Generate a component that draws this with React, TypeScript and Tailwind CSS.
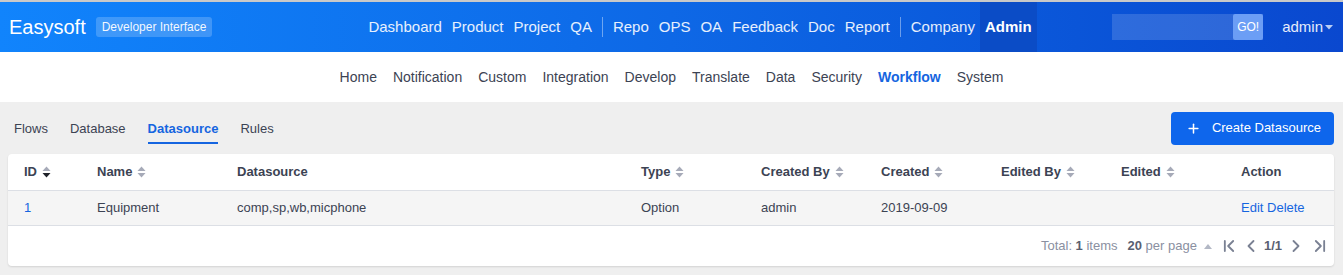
// Admin > Workflow > Datasource list
// Blue gradient top bar, centred admin sub-nav, tabs + action button, data table card.

import { ChevronFirst, ChevronLast, ChevronLeft, ChevronRight, Plus } from 'lucide-react';

const mainNav = [
  ['Dashboard', 'Product', 'Project', 'QA'],
  ['Repo', 'OPS', 'OA', 'Feedback', 'Doc', 'Report'],
  ['Company'],
];

const subNav = ['Home', 'Notification', 'Custom', 'Integration', 'Develop', 'Translate', 'Data', 'Security', 'Workflow', 'System'];
const tabs = ['Flows', 'Database', 'Datasource', 'Rules'];

const cols = 'grid grid-cols-[89px_140px_404px_120px_120px_120px_120px_120px_1fr] items-center';

function SortIcon({ active }: { active?: boolean }) {
  return (
    <svg width="9" height="12" viewBox="0 0 9 12" className="ml-[5px] inline-block">
      <path d="M4.5 0.5 L8.5 5 L0.5 5 Z" fill="#a6aab8" />
      <path d="M0.5 7 L8.5 7 L4.5 11.5 Z" fill={active ? '#1f2229' : '#a6aab8'} />
    </svg>
  );
}

function Th({ label, sort, active, first }: { label: string; sort?: boolean; active?: boolean; first?: boolean }) {
  return (
    <div className={`flex items-center font-bold ${first ? 'pl-4' : ''}`}>
      {label}
      {sort && <SortIcon active={active} />}
    </div>
  );
}

export default function App() {
  return (
    <div className="min-h-[275px] bg-[#efefef] font-['Liberation_Sans',Arial,sans-serif] text-[13px] text-[#3c4353]">
      {/* top bar */}
      <header className="flex h-[52px] items-stretch border-t-2 border-[#c9c9c9] bg-gradient-to-r from-[#1184fc] via-[#0e68e6] to-[#0a48cf] text-white">
        <div className="flex items-center pl-[9px]">
          <span className="text-[20px] leading-none">Easysoft</span>
          <span className="ml-[10px] rounded-[3px] bg-white/20 px-[6px] py-[3px] text-[12px] leading-[14px] text-white/95">
            Developer Interface
          </span>
        </div>

        <nav className="ml-[151px] flex items-stretch text-[15px] text-white/90">
          {mainNav.map((group, gi) => (
            <div key={gi} className="flex items-stretch">
              {gi > 0 && <div className="mx-[5px] my-[15px] w-px bg-white/40" />}
              {group.map((item) => (
                <a key={item} className="flex items-center px-[5px]">
                  {item}
                </a>
              ))}
            </div>
          ))}
          <a className="flex items-center bg-[#0b4cc6] px-[5px] font-bold text-white">Admin</a>
        </nav>

        <div className="ml-auto flex items-center pr-[10px]">
          <div className="flex h-[26px] w-[151px] items-stretch bg-white/15">
            <div className="flex-1" />
            <span className="flex w-[30px] items-center justify-center rounded-[2px] bg-[#6c9ef5] text-[12px] text-white">GO!</span>
          </div>
          <span className="ml-[19px] text-[15px] text-white/90">admin</span>
          <svg width="8" height="5" viewBox="0 0 8 5" className="ml-[2px]">
            <path d="M0 0 L8 0 L4 4.5 Z" fill="#b9cdf5" />
          </svg>
        </div>
      </header>

      {/* sub nav */}
      <nav className="flex h-[50px] items-center justify-center bg-white text-[14px] text-[#3c4353]">
        {subNav.map((item) => (
          <a key={item} className={`px-2 ${item === 'Workflow' ? 'font-bold text-[#1565e0]' : ''}`}>
            {item}
          </a>
        ))}
      </nav>

      <main className="px-2 pb-2">
        {/* tabs + button */}
        <div className="flex h-[52px] items-center">
          <div className="flex h-full items-center gap-[22px] pl-[6px] pt-[2px]">
            {tabs.map((t) => (
              <a key={t} className={`relative ${t === 'Datasource' ? 'font-bold text-[#1565e0]' : ''}`}>
                {t}
                {t === 'Datasource' && <span className="absolute -bottom-[5px] left-0 right-0 h-[2px] bg-[#1565e0]" />}
              </a>
            ))}
          </div>
          <button className="ml-auto mr-px flex h-[33px] items-center gap-[11px] rounded-[4px] bg-[#0e66ec] pl-[15px] pr-[13px] text-[13px] text-white">
            <Plus size={15} strokeWidth={2.4} />
            Create Datasource
          </button>
        </div>

        {/* table card */}
        <div className="mr-px rounded-[4px] bg-white shadow-[0_1px_2px_rgba(0,0,0,0.12)]">
          <div className={`${cols} h-[37px] border-b border-[#dcdfe5]`}>
            <Th label="ID" sort active first />
            <Th label="Name" sort />
            <Th label="Datasource" />
            <Th label="Type" sort />
            <Th label="Created By" sort />
            <Th label="Created" sort />
            <Th label="Edited By" sort />
            <Th label="Edited" sort />
            <Th label="Action" />
          </div>
          <div className={`${cols} h-[35px] border-b border-[#dcdfe5] bg-[#f5f5f5]`}>
            <div className="pl-4 text-[#1565e0]">1</div>
            <div>Equipment</div>
            <div>comp,sp,wb,micphone</div>
            <div>Option</div>
            <div>admin</div>
            <div>2019-09-09</div>
            <div />
            <div />
            <div className="text-[#1565e0]">Edit Delete</div>
          </div>
          <div className="flex h-[40px] items-center justify-end pr-[4px] text-[#8a90a1]">
            <span>
              Total: <b className="text-[#5a6071]">1</b> items
            </span>
            <span className="ml-[10px]">
              <b className="text-[#5a6071]">20</b> per page
            </span>
            <svg width="8" height="5" viewBox="0 0 8 5" className="ml-[7px]">
              <path d="M4 0 L8 5 L0 5 Z" fill="#b3b8c5" />
            </svg>
            <ChevronFirst size={20} strokeWidth={2.2} className="ml-[7px] text-[#7a8193]" />
            <ChevronLeft size={20} strokeWidth={2.2} className="ml-[2px] text-[#7a8193]" />
            <b className="ml-[3px] text-[#5a6071]">1/1</b>
            <ChevronRight size={20} strokeWidth={2.2} className="ml-[4px] text-[#7a8193]" />
            <ChevronLast size={20} strokeWidth={2.2} className="ml-[4px] text-[#7a8193]" />
          </div>
        </div>
      </main>
    </div>
  );
}
